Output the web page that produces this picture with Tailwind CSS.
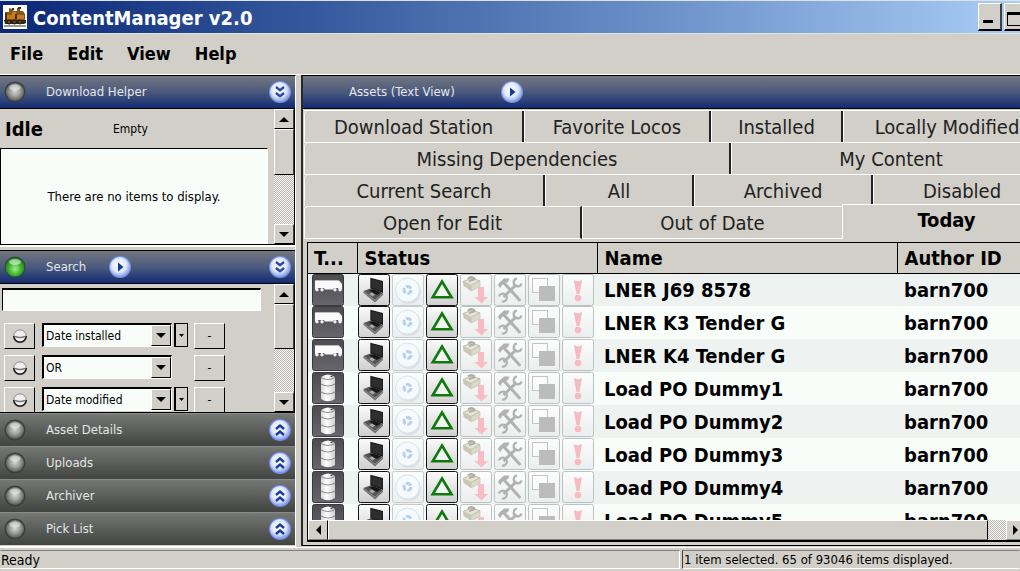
<!DOCTYPE html>
<html lang="en">
<head>
    <meta charset="UTF-8">
    <meta name="viewport" content="width=device-width, initial-scale=1.0">
    <title>ContentManager v2.0</title>
    <script src="https://cdn.jsdelivr.net/npm/@tailwindcss/browser@4"></script>
</head>
<body class="bg-[#d1cfc8] text-black font-['DejaVu_Sans_Condensed','DejaVu_Sans',sans-serif]">
    <!-- Icon sprites -->
    <svg class="absolute w-0 h-0" aria-hidden="true">
        <defs>
            <linearGradient id="face" x1="0" y1="0" x2="0" y2="1">
                <stop offset="0" stop-color="#fbfbfb"/><stop offset="1" stop-color="#cfcfcf"/>
            </linearGradient>
            <linearGradient id="faint" x1="0" y1="0" x2="0" y2="1">
                <stop offset="0" stop-color="#fcfdfd"/><stop offset="1" stop-color="#ebeeee"/>
            </linearGradient>
            <linearGradient id="slate" x1="0" y1="0" x2="0" y2="1">
                <stop offset="0" stop-color="#4b4b50"/><stop offset="1" stop-color="#66666d"/>
            </linearGradient>
            <linearGradient id="drum" x1="0" y1="0" x2="1" y2="0">
                <stop offset="0" stop-color="#d8d8d8"/><stop offset=".4" stop-color="#ffffff"/><stop offset="1" stop-color="#d0d0d0"/>
            </linearGradient>
            <radialGradient id="grayBall" cx=".5" cy=".45" r=".55">
                <stop offset="0" stop-color="#d8d8d6"/><stop offset=".5" stop-color="#a2a2a0"/><stop offset="1" stop-color="#5a5a5a"/>
            </radialGradient>
            <radialGradient id="greenBall" cx=".5" cy=".6" r=".6">
                <stop offset="0" stop-color="#a4f08c"/><stop offset=".5" stop-color="#46b834"/><stop offset="1" stop-color="#1c6a18"/>
            </radialGradient>
            <radialGradient id="blueBall" cx=".45" cy=".4" r=".6">
                <stop offset="0" stop-color="#ffffff"/><stop offset=".6" stop-color="#dfe8fc"/><stop offset="1" stop-color="#7f9be6"/>
            </radialGradient>
        </defs>
        <symbol id="i-gray" viewBox="0 0 22 22">
            <circle cx="11" cy="11" r="10.5" fill="#3c3e40"/><circle cx="11" cy="11" r="9" fill="url(#grayBall)"/>
            <ellipse cx="11" cy="6.5" rx="5.5" ry="3" fill="#fff" opacity=".45"/>
        </symbol>
        <symbol id="i-green" viewBox="0 0 22 22">
            <circle cx="11" cy="11" r="10.5" fill="#24502c"/><circle cx="11" cy="11" r="9.5" fill="url(#greenBall)"/>
            <ellipse cx="11" cy="6" rx="6" ry="3" fill="#fff" opacity=".55"/>
        </symbol>
        <symbol id="i-down" viewBox="0 0 22 22">
            <circle cx="11" cy="11" r="11" fill="#7892e0"/><circle cx="11" cy="11" r="10" fill="url(#blueBall)"/>
            <path d="M7 6l4 3.2L15 6M7 12l4 3.2 4-3.2" fill="none" stroke="#2a4aa4" stroke-width="2.4"/>
        </symbol>
        <symbol id="i-up" viewBox="0 0 22 22">
            <circle cx="11" cy="11" r="11" fill="#6f8cf0"/><circle cx="11" cy="11" r="10" fill="url(#blueBall)"/>
            <path d="M7 10l4-3.4 4 3.4M7 16l4-3.4 4 3.4" fill="none" stroke="#1c3a98" stroke-width="2.4"/>
        </symbol>
        <symbol id="i-play" viewBox="0 0 22 22">
            <circle cx="11" cy="11" r="11" fill="#7892e0"/><circle cx="11" cy="11" r="10" fill="url(#blueBall)"/>
            <path d="M9 6.5l5.5 4.5L9 15.5z" fill="#123a96"/>
        </symbol>
        <symbol id="i-knob" viewBox="0 0 16 16">
            <circle cx="8" cy="8" r="6.2" fill="#efefef" stroke="#8a8a8a" stroke-width="1"/>
            <path d="M1.8 8a6.2 6.2 0 0 0 12.4 0" fill="none" stroke="#222" stroke-width="1.6"/>
            <path d="M3 8.5q5 2 10 0" fill="none" stroke="#777" stroke-width="1.4"/>
        </symbol>
        <symbol id="i-wagon" viewBox="0 0 32 32">
            <rect x=".5" y=".5" width="31" height="31" rx="2" fill="url(#slate)" stroke="#3a3a3e"/>
            <path d="M3 6.5h24l3 3.5v5.5H27l-1-1.5h-4l-1 1.5h-8l-1-1.5H6l-1 1.5H3z" fill="#fafafa"/>
            <path d="M3 6.5h23" stroke="#bbb"/>
            <g fill="#f0f0f0"><circle cx="5" cy="15.8" r="1.7"/><circle cx="10" cy="15.8" r="1.7"/><circle cx="23" cy="15.8" r="1.7"/><circle cx="28" cy="15.8" r="1.7"/></g>
        </symbol>
        <symbol id="i-barrel" viewBox="0 0 32 32">
            <rect x=".5" y=".5" width="31" height="31" rx="2" fill="url(#slate)" stroke="#3a3a3e"/>
            <path d="M9 5q7-5 14 0v22q-7 4.5-14 0z" fill="url(#drum)"/>
            <path d="M9 5.5q7 4 14 0M9 12q7 4 14 0M9 20q7 4 14 0" fill="none" stroke="#909090" stroke-width="1.2"/>
            <path d="M18.5 4.5h2" stroke="#444" stroke-width="1.2"/>
        </symbol>
        <symbol id="i-laptop" viewBox="0 0 32 32">
            <rect x=".5" y=".5" width="31" height="31" rx="2" fill="url(#face)" stroke="#141414"/>
            <path d="M12.3 3.7L25 7v12l-12.7-4.500z" fill="#1c1c1c"/>
            <path d="M13.5 5.3L24 8v9l-10.500-3.300z" fill="#2e2e2e"/>
            <path d="M5.500 17l6.800-2.500L25 19l-8 7z" fill="#555"/>
            <path d="M5.500 17L17 26l8-7v2l-8 7.500L5.500 19z" fill="#777"/>
            <path d="M11 16.500l4-1.200 8 3-4 2.700z" fill="#161616"/>
            <path d="M11 20l3-1.500 3 2.300-2.500 1.800z" fill="#aaa"/>
        </symbol>
        <symbol id="i-disc" viewBox="0 0 32 32">
            <rect x=".5" y=".5" width="31" height="31" rx="2" fill="url(#faint)" stroke="#c6caca"/>
            <circle cx="17" cy="18" r="12" fill="#dde1e4"/>
            <circle cx="15.5" cy="16" r="12" fill="#f5fafd" stroke="#d8e2ea"/>
            <circle cx="15.5" cy="16" r="3.500" fill="none" stroke="#b8d0ec" stroke-width="3" stroke-dasharray="5.500 1.800"/>
        </symbol>
        <symbol id="i-triangle" viewBox="0 0 32 32">
            <rect x=".5" y=".5" width="31" height="31" rx="2" fill="url(#face)" stroke="#141414"/>
            <path d="M16 7.5L25.5 23.3H6.700z" fill="#f4f4f2" stroke="#0e7a0e" stroke-width="2.6"/>
        </symbol>
        <symbol id="i-package" viewBox="0 0 32 32">
            <rect x=".5" y=".5" width="31" height="31" rx="2" fill="url(#faint)" stroke="#bdc1c1"/>
            <path d="M3 7.500L12 4l8 3-9 4.500z" fill="#e6e4d4" stroke="#bdbba9"/>
            <path d="M3 7.500L11 11.500v5.500L3.500 12z" fill="#c9c7b8"/>
            <path d="M11 11.500L20 7v5.500L11 17z" fill="#dbd9ca" stroke="#c0beae" stroke-width=".6"/>
            <path d="M8 4.500q3-3 7 0M9 7l6-2" fill="none" stroke="#aeaea4" stroke-width="2"/>
            <path d="M18 13h6v10h4l-6.500 6.500L14.500 23H18z" fill="#f8bcc2"/>
        </symbol>
        <symbol id="i-tools" viewBox="0 0 32 32">
            <rect x=".5" y=".5" width="31" height="31" rx="2" fill="url(#faint)" stroke="#bdc1c1"/>
            <path d="M4 11.500l1-2.500 5-4.500h5.500l-1.500 3.500L10 10l-2 1-1.500 3z" fill="#b2b2b2"/>
            <path d="M10.500 9.500L25.500 26" stroke="#b2b2b2" stroke-width="3" stroke-linecap="round"/>
            <path d="M22.500 10.500L9.500 23" stroke="#b2b2b2" stroke-width="3"/>
            <path d="M23 4.500a4 4 0 1 0 4.500 5M5 22.500a4 4 0 1 1 3 5" fill="none" stroke="#b2b2b2" stroke-width="2.200"/>
        </symbol>
        <symbol id="i-squares" viewBox="0 0 32 32">
            <rect x=".5" y=".5" width="31" height="31" rx="2" fill="url(#faint)" stroke="#bdc1c1"/>
            <rect x="4.500" y="4.500" width="15" height="14" fill="#fbfbfb" stroke="#c4c4c4"/>
            <rect x="11" y="12" width="16" height="15" fill="#bcbcbc"/>
        </symbol>
        <symbol id="i-alert" viewBox="0 0 32 32">
            <rect x=".5" y=".5" width="31" height="31" rx="2" fill="url(#faint)" stroke="#bdc1c1"/>
            <path d="M11.800 6l4 1.500L20 6l-2.500 14h-3z" fill="#f6bcc0"/><circle cx="16" cy="24" r="3.300" fill="#f6bcc0"/>
        </symbol>
    </svg>

    <div class="flex flex-col h-screen overflow-hidden">
        <!-- Title bar -->
        <header class="flex items-center h-[34px] shrink-0 border-t border-b border-[#dfe3e6] bg-linear-to-r from-[#0b2676] to-[#a9cdf6] overflow-hidden">
            <svg class="w-6 h-6 ml-[3px] shrink-0" viewBox="0 0 24 24">
                <rect width="24" height="24" fill="#fff"/>
                <path d="M2 7h4V3l3 1 2 2h3V3h3v3h3l2 3v8H2z" fill="#8a5518"/>
                <path d="M3 10h6V7h4v3h8v4H3z" fill="#c8791c"/>
                <path d="M9 3h2v2H9zM15 2h3v2h-3zM2 8h2v8H2zM12 9h2v5h-2z" fill="#40301c"/>
                <path d="M1 15h22v3l-2 1H2z" fill="#33281c"/>
                <g fill="#6b451c" stroke="#181410"><circle cx="6" cy="17" r="2"/><circle cx="11.500" cy="17" r="2"/><circle cx="17" cy="17" r="2"/></g>
                <path d="M1 21h22" stroke="#333"/>
            </svg>
            <h1 class="ml-[6px] flex-1 pt-px text-xl font-bold text-white">ContentManager v2.0</h1>
            <div class="flex gap-[2px] h-7 shrink-0 -mr-2">
                <button aria-label="Minimize" class="w-6 flex items-end p-1 pb-[6px] bg-[#d1cfc8] border border-t-white border-l-white border-b-2 border-r-2 border-b-black border-r-[#404040]"><span class="block w-[10px] h-[3px] bg-black"></span></button>
                <button aria-label="Maximize" class="w-6 p-[2px] bg-[#d1cfc8] border border-t-white border-l-white border-b-2 border-r-2 border-b-black border-r-[#404040]"><span class="block mt-1 h-[14px] border border-t-3 border-black"></span></button>
            </div>
        </header>

        <!-- Menu -->
        <nav class="flex items-center gap-6 h-[41px] shrink-0 px-[10px] text-lg font-bold border-b border-white">
            <a href="#file">File</a>
            <a href="#edit">Edit</a>
            <a href="#view">View</a>
            <a href="#help">Help</a>
        </nav>

        <div class="flex flex-1 min-h-0">
            <!-- Left column -->
            <aside class="flex flex-col w-[296px] shrink-0 pb-px border-t border-t-black border-b border-b-white border-r border-r-white">
                <div class="flex items-center h-[33px] shrink-0 pl-1 pr-1 border-b border-b-black bg-linear-to-b from-[#727780] via-[#4b597c] to-[#132a72]">
                    <svg class="w-[22px] h-[22px]"><use href="#i-gray"/></svg>
                    <h2 class="ml-5 flex-1 text-[13px] font-extralight text-[#e4e6ea]">Download Helper</h2>
                    <button aria-label="Collapse"><svg class="w-[22px] h-[22px]"><use href="#i-down"/></svg></button>
                </div>
                <div class="flex h-[136px] shrink-0 border-b border-b-black border-r border-r-black">
                    <div class="flex flex-col flex-1 pr-[5px]">
                        <div class="flex items-center h-[39px] pl-[5px]">
                            <span class="w-[108px] text-xl font-bold">Idle</span>
                            <span class="text-xs">Empty</span>
                        </div>
                        <div class="flex flex-1 items-center justify-center mr-px border-t border-l border-t-black border-l-black border-r border-r-white bg-[#f8fdfa] text-[13px]">There are no items to display.</div>
                    </div>
                    <div class="flex flex-col w-5 bg-[repeating-conic-gradient(#f4f4f2_0_25%,#bcbab4_0_50%)] bg-size-[2px_2px]">
                        <button aria-label="Scroll up" class="flex items-center justify-center h-5 bg-[#d1cfc8] border border-t-white border-l-white border-b-black border-r-[#404040]"><svg class="w-[10px] h-[5px]" viewBox="0 0 10 5"><path d="M0 5l5-5 5 5z"/></svg></button>
                        <div class="h-[46px] bg-[#d1cfc8] border border-t-white border-l-white border-b-black border-r-[#404040]"></div>
                        <button aria-label="Scroll down" class="mt-auto flex items-center justify-center h-5 bg-[#d1cfc8] border border-t-white border-l-white border-b-black border-r-[#404040]"><svg class="w-[10px] h-[5px]" viewBox="0 0 10 5"><path d="M0 0h10L5 5z"/></svg></button>
                    </div>
                </div>
                <div class="h-[5px] shrink-0 border-t-2 border-t-white"></div>

                <div class="flex items-center h-[34px] shrink-0 pl-1 pr-1 border-t border-b border-black bg-linear-to-b from-[#727780] via-[#4b597c] to-[#132a72]">
                    <svg class="w-[22px] h-[22px]"><use href="#i-green"/></svg>
                    <h2 class="ml-5 w-[63px] text-[13px] font-extralight text-[#e4e6ea]">Search</h2>
                    <button aria-label="Run search"><svg class="w-[22px] h-[22px]"><use href="#i-play"/></svg></button>
                    <button aria-label="Collapse" class="ml-auto"><svg class="w-[22px] h-[22px]"><use href="#i-down"/></svg></button>
                </div>
                <div class="flex flex-1 min-h-0 border-r border-r-black">
                    <form class="flex-1 overflow-hidden pl-[2px] pt-1 text-xs">
                        <input type="text" aria-label="Search text" class="block w-[259px] h-[23px] px-1 bg-[#f8fdfa] border border-t-2 border-l-black border-t-black border-r-white border-b-white">
                        <div class="flex flex-col gap-[6px] mt-3 pl-[2px]">
                            <div class="flex h-[26px]">
                                <button type="button" aria-label="Toggle filter" class="flex items-center justify-center w-[31px] mr-[7px] border border-t-white border-l-white border-b-black border-r-black"><svg class="w-4 h-4"><use href="#i-knob"/></svg></button>
                                <div class="flex w-[130px] h-6 bg-[#f8fdfa] border border-t-2 border-l-2 border-t-black border-l-black border-b-white border-r-white">
                                    <select aria-label="First filter" class="appearance-none flex-1 min-w-0 pl-[2px] outline-none"><option>Date installed</option></select>
                                    <span class="flex items-center justify-center w-5 bg-[#d1cfc8] border border-t-white border-l-white border-b-black border-r-black pointer-events-none"><svg class="w-[10px] h-[5px]" viewBox="0 0 10 5"><path d="M0 0h10L5 5z"/></svg></span>
                                </div>
                                <button type="button" aria-label="First filter options" class="flex items-center justify-center w-[14px] h-6 ml-[2px] border border-l-2 border-t-black border-l-black border-b-black border-r-black"><svg class="w-[5px] h-[3px]" viewBox="0 0 5 3"><path d="M0 0h5L2.500 3z"/></svg></button>
                                <button type="button" aria-label="Remove first filter" class="w-[31px] ml-[6px] border border-t-white border-l-white border-b-black border-r-black">-</button>
                            </div>
                            <div class="flex h-[26px]">
                                <button type="button" aria-label="Toggle operator" class="flex items-center justify-center w-[31px] mr-[7px] border border-t-white border-l-white border-b-black border-r-black"><svg class="w-4 h-4"><use href="#i-knob"/></svg></button>
                                <div class="flex w-[130px] h-6 bg-[#f8fdfa] border border-t-2 border-l-2 border-t-black border-l-black border-b-white border-r-white">
                                    <select aria-label="Operator" class="appearance-none flex-1 min-w-0 pl-[2px] outline-none"><option>OR</option></select>
                                    <span class="flex items-center justify-center w-5 bg-[#d1cfc8] border border-t-white border-l-white border-b-black border-r-black pointer-events-none"><svg class="w-[10px] h-[5px]" viewBox="0 0 10 5"><path d="M0 0h10L5 5z"/></svg></span>
                                </div>
                                <button type="button" aria-label="Remove operator" class="w-[31px] ml-[22px] border border-t-white border-l-white border-b-black border-r-black">-</button>
                            </div>
                            <div class="flex h-[26px]">
                                <button type="button" aria-label="Toggle filter" class="flex items-center justify-center w-[31px] mr-[7px] border border-t-white border-l-white border-b-black border-r-black"><svg class="w-4 h-4"><use href="#i-knob"/></svg></button>
                                <div class="flex w-[130px] h-6 bg-[#f8fdfa] border border-t-2 border-l-2 border-t-black border-l-black border-b-white border-r-white">
                                    <select aria-label="Second filter" class="appearance-none flex-1 min-w-0 pl-[2px] outline-none"><option>Date modified</option></select>
                                    <span class="flex items-center justify-center w-5 bg-[#d1cfc8] border border-t-white border-l-white border-b-black border-r-black pointer-events-none"><svg class="w-[10px] h-[5px]" viewBox="0 0 10 5"><path d="M0 0h10L5 5z"/></svg></span>
                                </div>
                                <button type="button" aria-label="Second filter options" class="flex items-center justify-center w-[14px] h-6 ml-[2px] border border-l-2 border-t-black border-l-black border-b-black border-r-black"><svg class="w-[5px] h-[3px]" viewBox="0 0 5 3"><path d="M0 0h5L2.500 3z"/></svg></button>
                                <button type="button" aria-label="Remove second filter" class="w-[31px] ml-[6px] border border-t-white border-l-white border-b-black border-r-black">-</button>
                            </div>
                        </div>
                    </form>
                    <div class="flex flex-col w-5 bg-[repeating-conic-gradient(#f4f4f2_0_25%,#bcbab4_0_50%)] bg-size-[2px_2px]">
                        <button aria-label="Scroll up" class="flex items-center justify-center h-5 bg-[#d1cfc8] border border-t-white border-l-white border-b-black border-r-[#404040]"><svg class="w-[10px] h-[5px]" viewBox="0 0 10 5"><path d="M0 5l5-5 5 5z"/></svg></button>
                        <div class="h-[45px] bg-[#d1cfc8] border border-t-white border-l-white border-b-black border-r-[#404040]"></div>
                        <button aria-label="Scroll down" class="mt-auto flex items-center justify-center h-5 bg-[#d1cfc8] border border-t-white border-l-white border-b-black border-r-[#404040]"><svg class="w-[10px] h-[5px]" viewBox="0 0 10 5"><path d="M0 0h10L5 5z"/></svg></button>
                    </div>
                </div>
                <div id="closedPanels" class="shrink-0 border-t border-t-black"></div>
            </aside>

            <!-- Assets -->
            <main class="flex flex-col flex-1 min-w-0 ml-[5px] mb-px border-l-2 border-l-[#282828] border-t border-t-black border-b border-b-black overflow-hidden">
                <div class="flex items-center h-[33px] shrink-0 pl-[46px] border-b border-b-black bg-linear-to-b from-[#727780] via-[#4b597c] to-[#132a72]">
                    <h2 class="w-[152px] text-[13px] font-extralight text-[#e4e6ea]">Assets (Text View)</h2>
                    <button aria-label="Show assets"><svg class="w-[22px] h-[22px]"><use href="#i-play"/></svg></button>
                </div>
                <!-- Tab strips run on past the right edge of the window -->
                <div class="w-[calc(100%+30px)] pt-px pl-px text-xl text-[#222]">
                    <div class="flex h-8 border-t border-white">
                        <button class="w-[220px] border-l border-l-white border-r-2 border-r-[#222] rounded-tl">Download Station</button>
                        <button class="w-[187px] border-l border-l-white border-r-2 border-r-[#222]">Favorite Locos</button>
                        <button class="w-[132px] border-l border-l-white border-r-2 border-r-[#222]">Installed</button>
                        <button class="flex-1 border-l border-l-white">Locally Modified</button>
                    </div>
                    <div class="flex h-8 border-t border-white">
                        <button class="w-[427px] border-l border-l-white border-r-2 border-r-[#222] rounded-tl">Missing Dependencies</button>
                        <button class="flex-1 border-l border-l-white">My Content</button>
                    </div>
                    <div class="flex h-8 border-t border-white">
                        <button class="w-[241px] border-l border-l-white border-r-2 border-r-[#222] rounded-tl">Current Search</button>
                        <button class="w-[149px] border-l border-l-white border-r-2 border-r-[#222]">All</button>
                        <button class="w-[179px] border-l border-l-white border-r-2 border-r-[#222]">Archived</button>
                        <button class="flex-1 border-l border-l-white">Disabled</button>
                    </div>
                    <div class="flex h-[33px]">
                        <button class="w-[278px] border-t border-t-white border-b border-b-white border-l border-l-white border-r-2 border-r-[#222] rounded-tl">Open for Edit</button>
                        <button class="w-[260px] border-t border-t-white border-b border-b-white border-l border-l-white">Out of Date</button>
                        <button class="flex-1 -mt-[2px] pb-1 border-t border-t-white border-l border-l-white bg-[#d1cfc8] font-bold text-black">Today</button>
                    </div>
                </div>
                <div class="flex flex-col flex-1 min-h-0 mt-[3px] ml-1 mb-[3px] border-t border-l border-b-2 border-black">
                    <div class="flex-1 min-h-0 overflow-hidden bg-[#f8fdfa]">
                        <table class="w-full table-fixed text-xl font-bold">
                            <thead>
                                <tr class="h-[30px] bg-[#d1cfc8] text-left">
                                    <th class="w-[49px] pl-[6px] border-r border-b border-black whitespace-nowrap">T...</th>
                                    <th class="w-60 pl-[7px] border-r border-b border-black">Status</th>
                                    <th class="w-[300px] pl-[7px] border-r border-b border-black">Name</th>
                                    <th class="pl-[7px] border-b border-black whitespace-nowrap">Author ID</th>
                                </tr>
                            </thead>
                            <tbody id="assetRows"></tbody>
                        </table>
                    </div>
                    <div class="flex h-5 shrink-0 -mr-2 bg-[repeating-conic-gradient(#f4f4f2_0_25%,#bcbab4_0_50%)] bg-size-[2px_2px]">
                        <button aria-label="Scroll left" class="flex items-center justify-center w-5 bg-[#d1cfc8] border border-t-white border-l-white border-b-[#808080] border-r-black"><svg class="w-[5px] h-[10px]" viewBox="0 0 5 10"><path d="M5 0v10L0 5z"/></svg></button>
                        <div class="flex-1 bg-[#d1cfc8] border border-t-white border-l-white border-b-[#808080] border-r-black"></div>
                        <button aria-label="Scroll right" class="flex items-center justify-center w-[22px] ml-[18px] pr-1 bg-[#d1cfc8] border border-t-white border-l-white border-b-[#808080] border-r-black"><svg class="w-[5px] h-[10px]" viewBox="0 0 5 10"><path d="M0 0v10l5-5z"/></svg></button>
                    </div>
                </div>
            </main>
        </div>

        <!-- Status bar -->
        <footer class="flex gap-[2px] h-6 shrink-0 pt-[2px] pb-[2px] border-t border-t-white leading-[18px]">
            <div class="w-2/3 text-sm leading-[18px] border border-t-[#808080] border-l-transparent border-b-white border-r-white">Ready</div>
            <div class="flex-1 pl-px text-[13px] leading-[18px] border border-t-[#808080] border-l-[#404040] border-b-white border-r-transparent whitespace-nowrap">1 item selected. 65 of 93046 items displayed.</div>
        </footer>
    </div>

    <script>
        const closed = ['Asset Details', 'Uploads', 'Archiver', 'Pick List'];
        document.getElementById('closedPanels').innerHTML = closed.map(name => `
            <div class="flex items-center h-[33px] pl-1 pr-1 border-t border-t-[#8a8c8a] bg-linear-to-b from-[#767876] to-[#424442]">
                <svg class="w-[22px] h-[22px]"><use href="#i-gray"/></svg>
                <h2 class="ml-5 flex-1 text-[13px] font-extralight text-[#e4e6ea]">${name}</h2>
                <button aria-label="Expand ${name}"><svg class="w-[22px] h-[22px]"><use href="#i-up"/></svg></button>
            </div>`).join('');

        const assets = [
            ['wagon', 'LNER J69 8578'],
            ['wagon', 'LNER K3 Tender G'],
            ['wagon', 'LNER K4 Tender G'],
            ['barrel', 'Load PO Dummy1'],
            ['barrel', 'Load PO Dummy2'],
            ['barrel', 'Load PO Dummy3'],
            ['barrel', 'Load PO Dummy4'],
            ['barrel', 'Load PO Dummy5']
        ];
        const status = ['laptop', 'disc', 'triangle', 'package', 'tools', 'squares', 'alert'];
        document.getElementById('assetRows').innerHTML = assets.map(([type, name]) => `
            <tr class="h-[33px] odd:bg-[#eef3f1]">
                <td class="pl-1 align-top"><svg class="block w-8 h-8"><use href="#i-${type}"/></svg></td>
                <td class="pl-px align-top"><div class="flex gap-[2px]">${status.map(s => `<svg class="block w-8 h-8"><use href="#i-${s}"/></svg>`).join('')}</div></td>
                <td class="pl-[7px] whitespace-nowrap">${name}</td>
                <td class="pl-[7px]">barn700</td>
            </tr>`).join('');
    </script>
</body>
</html>
